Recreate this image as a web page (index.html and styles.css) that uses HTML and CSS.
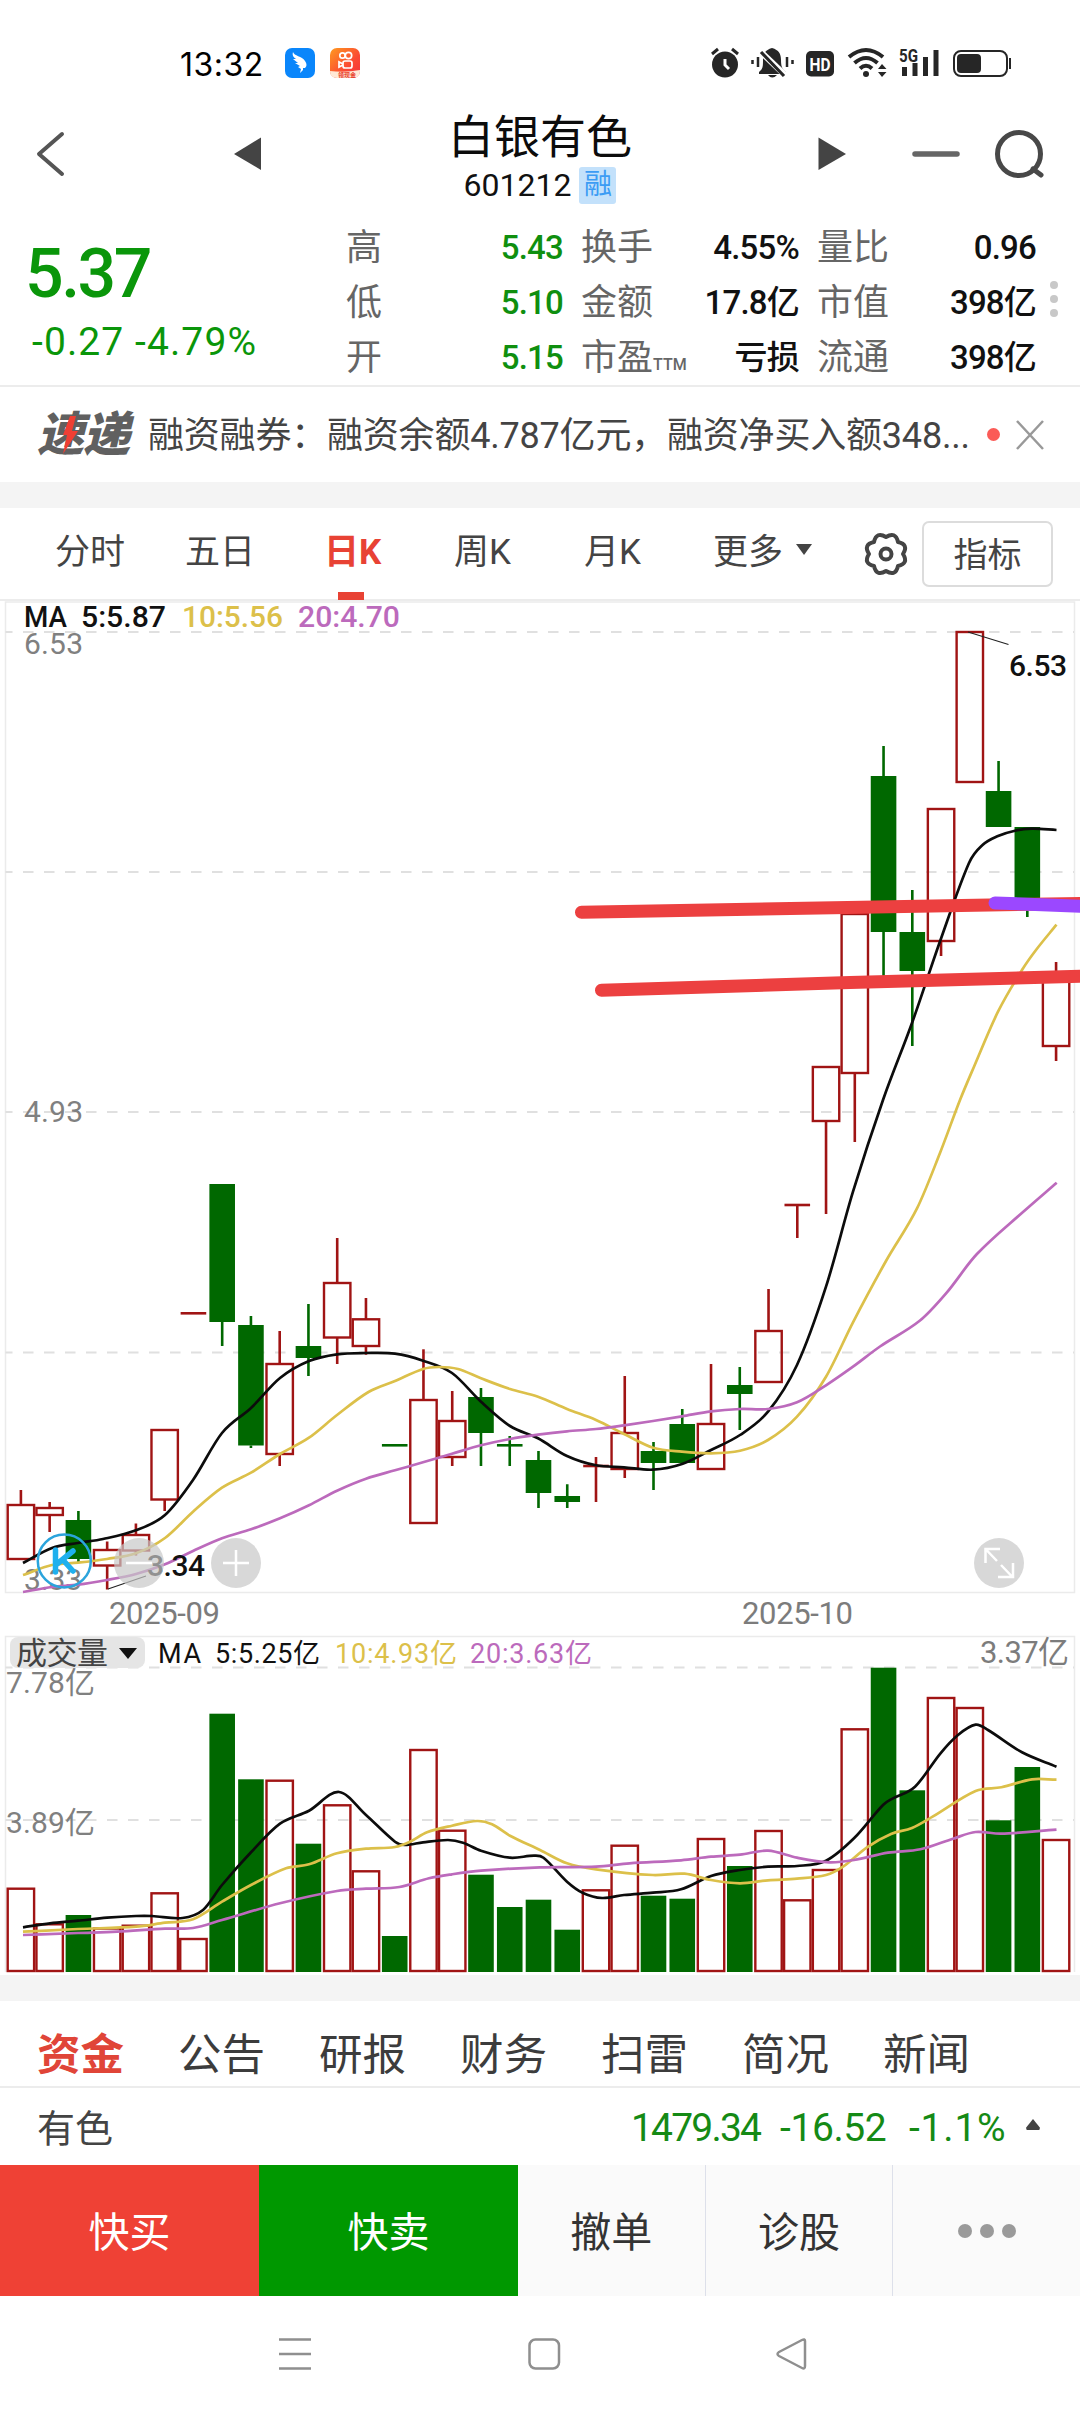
FILE: index.html
```html
<!DOCTYPE html>
<html lang="zh-CN">
<head>
  <meta charset="UTF-8">
  <meta name="viewport" content="width=device-width, initial-scale=1.0">
  <title>白银有色 601212</title>
  <link rel="stylesheet" href="styles.css">
</head>
<body>

<div class="status-bar">
  <span class="clock">13:32</span>
  <svg class="app-icon" width="30" height="30" viewBox="0 0 30 30">
    <rect width="30" height="30" rx="7" fill="#0a86fb"/>
    <path d="M8 4 C9 8 17 8 20 13 C22 16 22 18 20 20 L18 20 L18 22 L15 25 L16 21 L13 19 L15 18 L10 15 L13 15 L8 11 L11 11 C8 9 7 7 8 4Z" fill="#fff"/>
  </svg>
  <svg class="app-icon" width="30" height="30" viewBox="0 0 30 30">
    <defs>
      <linearGradient id="ks" x1="0" y1="0" x2="1" y2="1">
        <stop offset="0" stop-color="#ff9a1f"/>
        <stop offset="0.6" stop-color="#fb4a33"/>
        <stop offset="1" stop-color="#f52f3c"/>
      </linearGradient>
    </defs>
    <rect width="30" height="30" rx="7" fill="url(#ks)"/>
    <g fill="none" stroke="#fff" stroke-width="1.7">
      <circle cx="12.5" cy="7.5" r="2.7"/>
      <circle cx="18.5" cy="7.5" r="3.2"/>
      <rect x="13" y="13" width="9" height="7" rx="2"/>
      <path d="M13 16 L9 14 V19 L13 17"/>
    </g>
    <path d="M0 23 Q15 25 30 22 V23 Q30 30 23 30 H7 Q0 30 0 23Z" fill="#ffe9d6"/>
    <text x="8" y="29" class="app-tag">领现金</text>
  </svg>
  <svg class="status-icons" width="320" height="40" viewBox="700 43 320 40">
    <g fill="#262626">
      <circle cx="725" cy="64.500" r="13"/>
      <path d="M712 54 L718 49 M738 54 L732 49" stroke="#262626" stroke-width="3"/>
      <path d="M725 59 V65 L729 69" fill="none" stroke="#fff" stroke-width="3"/>
      <path d="M772 48 C779 50 781 54 781 60 C781 66 782 69 786 72 V74 H759 V72 C763 69 763 66 763 60 C763 54 765 50 772 48Z"/>
      <path d="M768 75 H777 Q772 80 768 75Z"/>
      <path d="M762 53 L785 75" stroke="#fff" stroke-width="6"/>
      <path d="M761 52 L784 76" stroke="#262626" stroke-width="3.200"/>
      <path d="M752.500 60 V64 M758 57 V67 M787 57 V67 M792.500 60 V64" stroke="#262626" stroke-width="2.500"/>
      <rect x="806" y="51" width="28" height="25.500" rx="5"/>
      <text x="809.500" y="71" class="hd" textLength="21" lengthAdjust="spacingAndGlyphs">HD</text>
      <g fill="none" stroke="#262626" stroke-width="4">
        <path d="M849 57 Q866 43 883 57"/>
        <path d="M854.500 63 Q866 53 877.500 63"/>
        <path d="M860 68.500 Q866 63 872 68.500"/>
      </g>
      <circle cx="866" cy="74" r="3"/>
      <path d="M878 69 L882 64 L886.500 69Z M878 72 L882 77 L886.500 72Z"/>
      <text x="899" y="61.500" class="net" textLength="19" lengthAdjust="spacingAndGlyphs">5G</text>
      <rect x="902" y="67" width="5" height="9"/>
      <rect x="912.500" y="63" width="5" height="13"/>
      <rect x="923" y="57" width="5" height="19"/>
      <rect x="933.500" y="50" width="5" height="26"/>
      <rect x="954" y="51" width="53" height="25" rx="7" fill="none" stroke="#262626" stroke-width="2"/>
      <rect x="957" y="54" width="24" height="19" rx="4"/>
      <rect x="1009" y="58" width="2" height="11"/>
    </g>
  </svg>
</div>

<div class="header">
  <svg class="header-left" width="300" height="60" viewBox="0 124 300 60">
    <path d="M62 134 L39 154 L62 174" fill="none" stroke="#555" stroke-width="4" stroke-linecap="round" stroke-linejoin="round"/>
    <path d="M234 154 L261 137.500 V170Z" fill="#444"/>
  </svg>
  <div class="title">
    <div class="name">白银有色</div>
    <div class="code">601212<span class="badge">融</span></div>
  </div>
  <svg class="header-right" width="300" height="60" viewBox="780 124 300 60">
    <path d="M846 154 L818.500 137.500 V170Z" fill="#444"/>
    <path d="M915 154 H957" stroke="#666" stroke-width="5.500" stroke-linecap="round"/>
    <circle cx="1019" cy="154" r="21.500" fill="none" stroke="#484848" stroke-width="5"/>
    <path d="M1033 169 L1041 175" stroke="#484848" stroke-width="5" stroke-linecap="round"/>
  </svg>
</div>

<div class="quote">
  <div class="price">
    <div class="last">5.37</div>
    <div class="change">-0.27 -4.79%</div>
  </div>
  <div class="stats">
    <span class="label">高</span><span class="value down">5.43</span>
    <span class="label">换手</span><span class="value">4.55%</span>
    <span class="label">量比</span><span class="value">0.96</span>
    <span class="label">低</span><span class="value down">5.10</span>
    <span class="label">金额</span><span class="value">17.8亿</span>
    <span class="label">市值</span><span class="value">398亿</span>
    <span class="label">开</span><span class="value down">5.15</span>
    <span class="label">市盈<small>TTM</small></span><span class="value">亏损</span>
    <span class="label">流通</span><span class="value">398亿</span>
  </div>
  <div class="more-dots"><i></i><i></i><i></i></div>
</div>

<div class="news">
  <div class="news-logo">速递
    <svg class="bolt" width="18" height="38" viewBox="0 0 18 38"><path d="M10 0 H16 L12 15 H18 L3 38 L7 19 H3Z" fill="#ee3f34"/></svg>
  </div>
  <div class="news-text">融资融券：融资余额4.787亿元，融资净买入额348...</div>
  <i class="red-dot"></i>
  <svg width="28" height="30" viewBox="0 0 28 30"><path d="M1 1 L27 29 M27 1 L1 29" stroke="#999" stroke-width="2.500"/></svg>
</div>

<div class="periods">
  <span class="period">分时</span>
  <span class="period">五日</span>
  <span class="period active">日K</span>
  <span class="period">周K</span>
  <span class="period">月K</span>
  <span class="period">更多<i class="caret"></i></span>
  <svg class="gear" width="46" height="46" viewBox="-23 -23 46 46">
    <path d="M0 -17 Q9.500 -23 12 -12 Q23 -9.500 17 0 Q23 9.500 12 12 Q9.500 23 0 17 Q-9.500 23 -12 12 Q-23 9.500 -17 0 Q-23 -9.500 -12 -12 Q-9.500 -23 0 -17Z" fill="none" stroke="#444" stroke-width="4" stroke-linejoin="round"/>
    <circle r="5.500" fill="none" stroke="#444" stroke-width="4"/>
  </svg>
  <span class="indicator-btn">指标</span>
</div>

<svg id="chart" class="chart" width="1080" height="1374" viewBox="0 601 1080 1374">
  <g fill="none" stroke="#ebebeb" stroke-width="1.500">
    <path d="M5.500 602 H1074.500 V1592.500 H5.500Z"/>
    <path d="M5.500 1972 V1636.500 H1074.500 V1972"/>
  </g>
  <g stroke="#e0e0e0" stroke-width="2" stroke-dasharray="10.500 10.500" stroke-dashoffset="3.500">
    <path d="M5.500 632 H1074"/>
    <path d="M5.500 872 H1074"/>
    <path d="M5.500 1112 H1074"/>
    <path d="M5.500 1352.500 H1074"/>
    <path d="M5.500 1667.500 H1074"/>
    <path d="M5.500 1820 H1074"/>
  </g>
  <g id="candles"></g>
  <g id="volumes"></g>

  <!-- axis labels -->
  <g class="axis din">
    <text x="24" y="654" textLength="59">6.53</text>
    <text x="24" y="1122" textLength="59">4.93</text>
    <text x="24" y="1590" textLength="58">3.33</text>
    <text x="6" y="1693" textLength="89">7.78亿</text>
    <text x="6" y="1832.500" textLength="89">3.89亿</text>
  </g>
  <g id="averages" fill="none" stroke-width="2.700"></g>

  <!-- trend lines drawn by hand -->
  <g stroke-width="13" stroke-linecap="round">
    <path d="M581.500 912.300 L1090 903.300 M601.500 990.300 L850 982.500 L1090 976" stroke="#ec4040" fill="none"/>
    <path d="M995 903 L1090 906.500" stroke="#9b48ff"/>
  </g>

  <g stroke="#222" stroke-width="1.200">
    <path d="M968 632 L1008.500 644.500 M108 1589 L146 1576"/>
  </g>
  <g class="mark din">
    <text x="1009" y="676" textLength="58">6.53</text>
    <text x="147" y="1576" textLength="58">3.34</text>
  </g>

  <!-- chart buttons -->
  <circle cx="64.300" cy="1561" r="26.500" fill="none" stroke="#2ba4dc" stroke-width="2.500"/>
  <path d="M55.500 1550 V1572 M73 1551 L57 1564 M63 1560 L73 1571" fill="none" stroke="#1fb0ee" stroke-width="5.500" stroke-linecap="round"/>
  <g fill="#c8c8c8" fill-opacity="0.7">
    <circle cx="139" cy="1563" r="25"/>
    <circle cx="236" cy="1563" r="25"/>
    <circle cx="999" cy="1563" r="25"/>
  </g>
  <path d="M126 1563 H152 M223 1563 H249 M236 1550 V1576 M1000 1549 H985.500 V1563 M986 1549.500 L997 1561 M998 1577 H1013 V1563 M1012 1576.500 L1001 1565" fill="none" stroke="#fff" stroke-width="2.500"/>

  <g class="legend din">
    <text x="24" y="627" textLength="43" lengthAdjust="spacingAndGlyphs">MA</text>
    <text x="81" y="627" textLength="85" lengthAdjust="spacingAndGlyphs">5:5.87</text>
    <text x="182" y="627" textLength="101" lengthAdjust="spacingAndGlyphs" fill="#dcc04a">10:5.56</text>
    <text x="298" y="627" textLength="102" lengthAdjust="spacingAndGlyphs" fill="#bc6abc">20:4.70</text>
  </g>

  <g class="date">
    <text x="109" y="1624" textLength="111">2025-09</text>
    <text x="742" y="1624" textLength="111">2025-10</text>
  </g>

  <rect x="10" y="1637" width="135" height="31" rx="8" fill="#e5e5e5"/>
  <text x="16" y="1663.500" class="vol-name" textLength="92">成交量</text>
  <path d="M119 1648 H137 L128 1659Z" fill="#111"/>
  <g class="vol-legend">
    <text x="158" y="1663" textLength="43">MA</text>
    <text x="215" y="1663" textLength="105">5:5.25亿</text>
    <text x="335" y="1663" textLength="122" fill="#dcc04a">10:4.93亿</text>
    <text x="470" y="1663" textLength="122" fill="#bc6abc">20:3.63亿</text>
  </g>
  <text x="980" y="1663" class="vol-last" textLength="89">3.37亿</text>
</svg>

<div class="band"></div>

<div class="info-tabs">
  <span class="active">资金</span>
  <span>公告</span>
  <span>研报</span>
  <span>财务</span>
  <span>扫雷</span>
  <span>简况</span>
  <span>新闻</span>
</div>

<div class="sector">
  <span class="sector-name">有色</span>
  <span class="sector-num n1">1479.34</span>
  <span class="sector-num n2">-16.52</span>
  <span class="sector-num n3">-1.1%</span>
  <i class="caret-up"></i>
</div>

<div class="actions">
  <span class="buy">快买</span>
  <span class="sell">快卖</span>
  <span class="plain">撤单</span>
  <span class="plain">诊股</span>
  <span class="plain dots"><i></i><i></i><i></i></span>
</div>

<div class="nav-bar">
  <svg width="1080" height="116" viewBox="0 2296 1080 116">
    <g fill="none" stroke="#8f8f8f" stroke-width="2.500" stroke-linejoin="round">
      <path d="M279 2339.500 H311 M279 2354 H311 M279 2368.500 H311"/>
      <rect x="529.500" y="2339.500" width="29.500" height="29" rx="6"/>
      <path d="M802 2340 Q805 2338.500 805 2341 V2366 Q805 2369.500 802 2368 L779 2356 Q776 2354 779 2352Z"/>
    </g>
  </svg>
</div>

<script>
// [direction, bodyTop, bodyBottom, high, low, volumeTop]
const candles = [
  ['up', 1505, 1559, 1490, 1559, 1888.7],
  ['up', 1508, 1515, 1502, 1532, 1924.3],
  ['down', 1520, 1559, 1511, 1562, 1915],
  ['up', 1550, 1565.5, 1541.5, 1589.5, 1928.5],
  ['up', 1535, 1550.5, 1523.5, 1555.5, 1925.7],
  ['up', 1430, 1499.5, 1430, 1511, 1893.3],
  ['up', 1313.3, 1313.3, 1313.3, 1313.3, 1939],
  ['down', 1184, 1322, 1184, 1346, 1713.7],
  ['down', 1325, 1445.5, 1316, 1448, 1779.3],
  ['up', 1364, 1454, 1331, 1466, 1780.7],
  ['down', 1346, 1358, 1304, 1376, 1843.7],
  ['up', 1283, 1337.5, 1238, 1364, 1805.3],
  ['up', 1319.3, 1346, 1298, 1354.7, 1871.3],
  ['down', 1445.3, 1445.3, 1445.3, 1445.3, 1936],
  ['up', 1400, 1523, 1349.3, 1523, 1750],
  ['up', 1421, 1457, 1391, 1466, 1830.7],
  ['down', 1397, 1433, 1388, 1466, 1874.7],
  ['down', 1445.3, 1445.3, 1436, 1466, 1907],
  ['down', 1460, 1493, 1451, 1508, 1899.7],
  ['down', 1496, 1502, 1484.3, 1508, 1929.7],
  ['up', 1466, 1466, 1457, 1502, 1890.3],
  ['up', 1433, 1469, 1376, 1478, 1845.7],
  ['down', 1451, 1463, 1442, 1490, 1895.7],
  ['down', 1424, 1463, 1409, 1463, 1898.7],
  ['up', 1424, 1469, 1364, 1469, 1839],
  ['down', 1385, 1394, 1367, 1430, 1866],
  ['up', 1331, 1382, 1289, 1382, 1831],
  ['up', 1205, 1205, 1205, 1238, 1900.3],
  ['up', 1067, 1121, 1067, 1214, 1870],
  ['up', 914, 1073, 914, 1142, 1729.3],
  ['down', 776, 932, 746, 977, 1667.7],
  ['down', 932, 971, 890, 1046, 1790.3],
  ['up', 809, 941, 809, 956, 1698],
  ['up', 632, 782, 632, 782, 1708],
  ['down', 791, 827, 761, 827, 1820.3],
  ['down', 827, 899, 827, 917, 1767],
  ['up', 980, 1046, 962, 1061, 1840]
];

const averages = [
  // price MA5 / MA10 / MA20
  ['#0c0c0c', [23,1563, 52,1548, 78,1543, 103,1539, 136,1530.3, 165,1515, 193,1480, 222,1433, 251,1408, 280,1378, 309,1361, 337,1354.3, 366,1353, 395,1353.7, 423,1360.7, 452,1373, 481,1401.7, 510,1426, 538,1438.3, 567,1456, 596,1465.3, 624,1467.3, 653,1469.7, 682,1464, 711,1450, 740,1435, 768,1411.7, 797,1365, 826,1286.7, 853,1191.7, 883,1100, 912,1023, 940.5,940, 969,863, 982.5,845, 998,836, 1015,830.7, 1032,828.7, 1056.5,830]],
  ['#dcc04a', [23,1575, 52,1565, 78,1562.7, 107,1559, 136,1553.3, 165,1538, 193,1511.7, 222,1487.7, 251,1472.7, 280,1454, 309,1437.7, 337,1415, 368.5,1392, 395,1381, 423,1369, 439,1367, 458,1369, 481,1378.3, 510,1389, 538,1396.7, 567,1409, 596,1420, 624,1434, 653,1447.7, 682,1451.7, 711,1453.3, 740,1450.7, 768,1440, 797,1416.7, 826,1376.7, 853,1322.3, 886,1261, 917,1208.4, 940,1153, 960,1100, 974,1066.7, 998,1011.7, 1022,970, 1036,950, 1056.5,924.7]],
  ['#bc6abc', [23,1592, 52,1587, 78,1584.7, 107,1580, 136,1574, 165,1564.3, 193,1551, 222,1538.3, 251,1529.3, 280,1518.3, 309,1505.3, 337,1490.7, 366,1478.7, 395,1470.3, 423,1462.3, 452,1453.7, 481,1445.3, 510,1439, 538,1434.7, 567,1431.3, 596,1429, 624,1425.3, 653,1421, 682,1416.3, 711,1411.3, 740,1409, 768,1409, 797,1402.3, 826,1385.3, 853,1366.7, 880,1346.5, 920,1320.5, 946.7,1292.6, 976.7,1254.3, 1023,1212, 1056.7,1182.7]],
  // volume MA5 / MA10 / MA20
  ['#0c0c0c', [23,1927.3, 50,1923.3, 78,1920.7, 107,1917.7, 136,1916, 152,1916, 182.5,1918, 203,1910, 222,1885, 251,1852.3, 280,1823.7, 309,1810.7, 339,1792, 366,1815, 395,1841.7, 404.6,1845, 423,1842.3, 448,1840, 463,1842.7, 481,1850.7, 510,1857.7, 534,1855.7, 543.5,1857.7, 567,1881.7, 583,1893, 602,1898, 624,1895, 653,1892.7, 681,1889.3, 711,1876, 740,1870, 768,1866.7, 797,1866, 826,1860.7, 854,1838.3, 883,1805, 893,1798.3, 915,1786.7, 940.5,1753.3, 958,1735, 975.6,1724.7, 988,1730, 1022,1752.3, 1056.5,1766.7]],
  ['#dcc04a', [23,1931.7, 78,1929, 136,1926.7, 165,1922.7, 193,1919.3, 222,1901.7, 251,1885, 286,1868.3, 309,1864.3, 337,1853.3, 366,1848.7, 395,1847, 410,1841.7, 427,1832.3, 452,1825.7, 477,1821, 492,1824.3, 510,1835.7, 540,1850, 567,1863.3, 596,1869.3, 653,1875, 684.6,1873.7, 711,1880, 740,1883.3, 768,1880.3, 797,1878.7, 826,1875, 843,1866.7, 867,1847.3, 891,1834, 912,1828, 932.6,1816.7, 975.6,1791, 1001.4,1787.3, 1032,1779.3, 1056.5,1779.7]],
  ['#bc6abc', [23,1935, 78,1933, 117,1931.7, 165,1928.7, 193,1928, 222,1920, 280,1903.3, 337,1891, 366,1888.7, 399.4,1887, 429,1878.3, 452,1874.3, 481,1870.7, 540,1867.3, 596,1866.7, 629.5,1863.3, 681,1860.3, 711,1856.7, 740,1854.7, 768,1850.7, 797,1857.7, 829,1862.3, 854,1860, 888,1852.7, 920.5,1849.3, 953,1838.7, 975.6,1832, 1001,1833.7, 1056.5,1829.7]]
];

const FIRST_X = 20.9;
const STEP = 28.755;
const VOL_BOTTOM = 1972;

function bar(dir, x, top, bottom) {
  if (dir === 'up') {
    return `<rect class="up" x="${x - 13.2}" y="${top}" width="26.4" height="${bottom - top}"/>`;
  }
  return `<rect class="down" x="${x - 12.8}" y="${top}" width="25.6" height="${bottom - top}"/>`;
}

function smooth(p) {
  const n = p.length / 2;
  const pt = i => { i = Math.max(0, Math.min(n - 1, i)); return [p[i * 2], p[i * 2 + 1]]; };
  let d = `M${p[0]} ${p[1]}`;
  for (let i = 0; i < n - 1; i++) {
    const [a, b, c, e] = [pt(i - 1), pt(i), pt(i + 1), pt(i + 2)];
    // keep the handles short where the points are unevenly spaced
    const h = (c[0] - b[0]) / 3;
    const s1 = (c[1] - a[1]) / (c[0] - a[0]);
    const s2 = (e[1] - b[1]) / (e[0] - b[0]);
    d += ` C${b[0] + h} ${b[1] + h * s1} ${c[0] - h} ${c[1] - h * s2} ${c[0]} ${c[1]}`;
  }
  return d;
}

let candleHtml = '';
let volumeHtml = '';
candles.forEach(([dir, top, bottom, high, low, vol], i) => {
  const x = FIRST_X + STEP * i;
  if (top === bottom) {
    candleHtml += `<path class="wick-${dir}" d="M${x - 12.8} ${top} H${x + 12.8}"/>`;
  } else {
    candleHtml += bar(dir, x, top, bottom);
  }
  candleHtml += `<path class="wick-${dir}" d="M${x} ${high} V${top} M${x} ${bottom} V${low}"/>`;
  volumeHtml += bar(dir, x, vol, (dir === 'up' ? VOL_BOTTOM - 1 : VOL_BOTTOM));
});
document.getElementById('candles').innerHTML = candleHtml;
document.getElementById('volumes').innerHTML = volumeHtml;
document.getElementById('averages').innerHTML = averages
  .map(([color, pts]) => `<path stroke="${color}" d="${smooth(pts)}"/>`).join('');
</script>
</body>
</html>
```

FILE: styles.css
```css
* {
  box-sizing: border-box;
}
body {
  margin: 0;
  width: 1080px;
  background: #fff;
  color: #111;
  font-family: Roboto, "Noto Sans CJK SC", sans-serif;
}
svg {
  display: block;
}
i {
  display: block;
}

/* status bar */
.status-bar {
  height: 105px;
  padding: 43px 60px 0 180px;
  display: flex;
  align-items: flex-start;
}
.clock {
  width: 105px;
  font-family: Inter, sans-serif;
  font-size: 32px;
  font-weight: 400;
  line-height: 43px;
  letter-spacing: 0.5px;
  color: #000;
}
.app-icon {
  margin-top: 5px;
  margin-right: 15px;
}
.app-tag {
  font-size: 6px;
  font-weight: 700;
  fill: #e8402c;
}
.status-icons {
  margin-left: auto;
}
.hd {
  font-size: 19px;
  font-weight: 700;
  fill: #fff;
}
.net {
  font-size: 19px;
  font-weight: 700;
}

/* header */
.header {
  height: 112px;
  display: flex;
  justify-content: space-between;
}
.header-left, .header-right {
  margin-top: 19px;
}
.title {
  text-align: center;
}
.name {
  height: 62px;
  font-size: 46px;
  line-height: 64px;
  color: #0c0c0c;
}
.code {
  display: flex;
  align-items: center;
  justify-content: center;
  height: 36px;
  font-size: 32px;
  line-height: 36px;
}
.badge {
  width: 37px;
  height: 37px;
  margin-left: 8px;
  background: #c3e1fb;
  border-radius: 3px;
  color: #3c9cf4;
  font-size: 28px;
  line-height: 36px;
}

/* quote */
.quote {
  height: 170px;
  display: flex;
  border-bottom: 2px solid #ececec;
}
.price {
  width: 346px;
  padding-left: 25px;
  color: #0a960a;
}
.last {
  margin-top: 22px;
  font-size: 68px;
  font-weight: 500;
  line-height: 70px;
  letter-spacing: -2.5px;
}
.change {
  margin-top: 10px;
  padding-left: 7px;
  font-size: 39px;
  line-height: 46px;
  letter-spacing: 1.1px;
  white-space: nowrap;
}
.stats {
  display: grid;
  grid-template-columns: 117px 100px 136px 100px 137px 100px;
  grid-template-rows: 55px 55px 55px;
  margin-top: 4px;
  width: 690px;
}
.stats .label {
  font-size: 36px;
  line-height: 55px;
  color: #666;
  white-space: nowrap;
}
.stats .label:nth-child(6n + 3), .stats .label:nth-child(6n + 5) {
  padding-left: 18px;
}
.stats .label small {
  font-size: 16px;
  font-weight: 500;
}
.stats .value {
  font-size: 33px;
  font-weight: 500;
  line-height: 54px;
  letter-spacing: -0.8px;
  text-align: right;
  white-space: nowrap;
}
.stats .value.down {
  color: #0f8f0f;
}
.more-dots {
  margin: 64px 0 0 14px;
}
.more-dots i {
  width: 8px;
  height: 8px;
  margin-bottom: 6px;
  border-radius: 50%;
  background: #c8c8c8;
}

/* news */
.news {
  height: 95px;
  padding-left: 37px;
  display: flex;
  align-items: center;
}
.news-logo {
  position: relative;
  width: 111px;
  font-size: 47px;
  font-weight: 900;
  font-style: italic;
  line-height: 50px;
  letter-spacing: -1px;
  color: #606060;
  white-space: nowrap;
}
.bolt {
  position: absolute;
  left: 23px;
  top: 6px;
}
.news-text {
  width: 839px;
  padding-top: 3px;
  font-size: 36px;
  line-height: 50px;
  letter-spacing: -0.2px;
  color: #444;
  white-space: nowrap;
}
.red-dot {
  width: 13px;
  height: 13px;
  margin-right: 16px;
  border-radius: 50%;
  background: #fb5b57;
}

/* period tabs */
.periods {
  height: 119px;
  border-top: 26px solid #f4f4f4;
  border-bottom: 2px solid #ececec;
  padding-left: 55px;
  display: flex;
}
.period {
  position: relative;
  width: 130px;
  height: 92px;
  font-size: 35px;
  line-height: 89px;
  color: #444;
  white-space: nowrap;
}
.period:nth-child(3) {
  margin-left: 9px;
}
.period:nth-child(6) {
  display: flex;
  width: 150px;
  margin-left: -1px;
}
.period.active {
  color: #e84234;
  font-weight: 700;
}
.period.active::after {
  content: "";
  position: absolute;
  left: 14px;
  bottom: 0;
  width: 26px;
  height: 8px;
  background: #e84234;
}
.caret {
  margin: 36px 0 0 13px;
  width: 16px;
  height: 11px;
  background: #444;
  clip-path: polygon(0 0, 100% 0, 50% 100%);
}
.gear {
  margin-top: 23px;
}
.indicator-btn {
  width: 131px;
  height: 66px;
  margin: 13px 0 0 13px;
  border: 2px solid #dcdcdc;
  border-radius: 7px;
  font-size: 34px;
  line-height: 65px;
  text-align: center;
  color: #444;
}

/* chart */
.up {
  fill: none;
  stroke: #a01414;
  stroke-width: 2.4;
}
.down {
  fill: #006800;
}
.wick-up {
  stroke: #a01414;
  stroke-width: 2.6;
}
.wick-down {
  stroke: #006800;
  stroke-width: 2.6;
}
.din {
  font-size: 30px;
  font-weight: 500;
}
.axis {
  font-weight: 400;
  fill: #808080;
}
.mark, .legend {
  fill: #111;
}
.date {
  font-size: 31px;
  fill: #7c7c7c;
}
.vol-name {
  font-size: 31px;
  fill: #444;
}
.vol-legend {
  font-size: 27px;
  fill: #111;
}
.vol-last {
  font-size: 31px;
  fill: #7c7c7c;
}

.band {
  height: 26px;
  background: #f4f4f4;
}

/* info tabs */
.info-tabs {
  height: 87px;
  padding-left: 37px;
  display: flex;
  border-bottom: 2px solid #ececec;
}
.info-tabs span {
  width: 141px;
  font-size: 43.5px;
  line-height: 110px;
  color: #3c3c3c;
}
.info-tabs .active {
  color: #e04538;
  font-weight: 700;
}

.sector {
  height: 77px;
  padding-left: 37px;
  display: flex;
  align-items: center;
}
.sector-name {
  width: 594px;
  margin-top: -3px;
  font-size: 38px;
  color: #444;
}
.sector-num {
  font-size: 39px;
  line-height: 78px;
  padding-top: 3px;
  color: #158a15;
}
.n1 {
  width: 149px;
  letter-spacing: -1.8px;
}
.n2 {
  width: 129px;
  letter-spacing: -0.4px;
}
.n3 {
  width: 117px;
  letter-spacing: 0.8px;
}
.caret-up {
  width: 14px;
  height: 11px;
  margin-top: -4px;
  background: #444;
  clip-path: polygon(50% 0, 100% 80%, 95% 100%, 5% 100%, 0 80%);
}

/* actions */
.actions {
  height: 131px;
  display: flex;
  background: #fafafa;
  font-size: 41px;
  line-height: 136px;
  text-align: center;
}
.buy, .sell {
  flex: none;
  width: 259px;
  color: #fff;
}
.buy {
  background: #ef4135;
}
.sell {
  background: #009800;
}
.plain {
  flex: 1;
  color: #333;
}
.plain + .plain {
  border-left: 1px solid #dde0ea;
}
.dots {
  display: flex;
  align-items: center;
  justify-content: center;
  gap: 8px;
}
.dots i {
  width: 14px;
  height: 14px;
  border-radius: 50%;
  background: #9a9a9a;
}
.nav-bar {
  height: 116px;
}
```
